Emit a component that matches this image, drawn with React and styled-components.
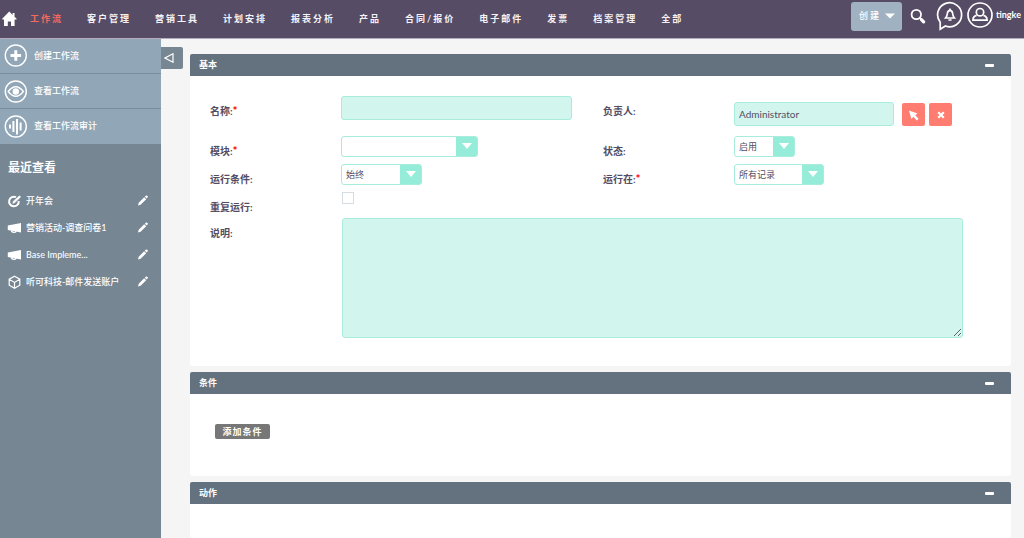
import React from "react";
import styled, { createGlobalStyle, css } from "styled-components";

const GlobalStyle = createGlobalStyle`
  *, *::before, *::after { box-sizing: border-box; }
  body {
    margin: 0;
    background: #f5f5f5;
    color: #534d64;
    font-family: Lato, "Noto Sans CJK SC", sans-serif;
    font-size: 9px;
    line-height: 14px;
  }
  button, input, select, textarea { font: inherit; color: inherit; margin: 0; }
  button { border: 0; padding: 0; cursor: pointer; }
  a { color: inherit; text-decoration: none; }
  h2, ul { margin: 0; padding: 0; }
  ul { list-style: none; }
  svg { display: block; flex: none; }
`;

const Page = styled.div`
  display: flex;
  flex-direction: column;
  min-height: 100vh;
`;

const TopBar = styled.header`
  display: flex;
  justify-content: space-between;
  height: 38px;
  background: #564c65;
  color: #fff;
  box-shadow: 0 1px 0 #b5acbd;
  position: relative;
`;

const Nav = styled.nav`
  display: flex;
  align-items: center;
  padding-left: 2px;
`;

const HomeLink = styled.a`
  margin-right: 12px;
`;

const NavLink = styled.a`
  margin-right: 24px;
  font-weight: 700;
  letter-spacing: 2px;
  white-space: nowrap;
  color: ${(p) => (p.$active ? "#f5695f" : "#f5f3f7")};
`;

const Tools = styled.div`
  display: flex;
  align-items: flex-start;
  padding: 2px 3px 0 0;
`;

const CreateButton = styled.button`
  display: flex;
  align-items: center;
  justify-content: space-between;
  width: 51px;
  height: 29px;
  padding: 0 7px 2px 8px;
  margin-right: 8px;
  border-radius: 3px;
  background: #a0b2c1;
  color: #fff;
  font-weight: 500;
  letter-spacing: 2px;
`;

const IconButton = styled.button`
  display: flex;
  align-items: center;
  height: 28px;
  margin-right: ${(p) => p.$gap}px;
  background: none;
  color: #fff;
`;

const UserLink = styled.a`
  display: flex;
  align-items: center;
  gap: 3px;
  height: 26px;
  font-weight: 700;
`;

const Content = styled.div`
  display: flex;
  flex: 1;
`;

const Sidebar = styled.aside`
  flex: none;
  width: 161px;
  background: #778693;
  color: #fff;
`;

const Actions = styled.nav`
  padding-bottom: 1px;
  background: #91a6b6;
`;

const ActionLink = styled.a`
  display: flex;
  align-items: center;
  gap: 7px;
  height: 35px;
  padding-left: 4px;
  font-weight: 500;
  & + & {
    border-top: 1px solid #7b8d9b;
  }
`;

const RecentTitle = styled.h2`
  padding: 16px 8px 11px;
  font-size: 12px;
  line-height: 16px;
  font-weight: 700;
`;

const RecentItem = styled.li`
  display: flex;
  align-items: center;
  justify-content: space-between;
  height: 27px;
  padding: 0 13px 0 7px;
`;

const RecentLink = styled.a`
  display: flex;
  align-items: center;
  gap: 4px;
  font-weight: 500;
  white-space: nowrap;
`;

const Main = styled.main`
  display: flex;
  align-items: stretch;
  gap: 7px;
  flex: 1;
  min-width: 0;
  padding-right: 13px;
`;

const CollapseButton = styled.button`
  display: flex;
  align-items: center;
  justify-content: center;
  width: 22px;
  height: 22px;
  margin-top: 9px;
  padding-right: 6px;
  border-radius: 0 2px 2px 0;
  background: #778693;
`;

const Panels = styled.form`
  display: flex;
  flex-direction: column;
  gap: 6px;
  flex: 1;
  min-width: 0;
  padding-top: 16px;
`;

const Panel = styled.section`
  display: flex;
  flex-direction: column;
  flex: ${(p) => (p.$fill ? 1 : "none")};
  border-radius: 3px;
  background: #fff;
`;

const PanelHeader = styled.div`
  display: flex;
  align-items: center;
  justify-content: space-between;
  height: 22px;
  padding: 0 17px 0 9px;
  border-radius: 2px 2px 0 0;
  background: #64727f;
  color: #fff;
`;

const PanelTitle = styled.h2`
  font-size: 9px;
  font-weight: 700;
`;

const ToggleButton = styled.button`
  width: 9px;
  height: 3px;
  border-radius: 1px;
  background: #fff;
`;

const FormGrid = styled.div`
  display: grid;
  grid-template-columns: 131fr 262fr 131fr 277fr;
  align-items: start;
  padding: 20px 0 27px 20px;
`;

const Label = styled.label`
  padding-top: 8px;
  font-size: 10px;
  font-weight: 700;
`;

const Required = styled.span`
  color: #ff0000;
  font-size: 12px;
  line-height: 12px;
`;

const Field = styled.div`
  display: flex;
  align-items: center;
  padding-bottom: ${(p) => p.$bottom || 7}px;
  padding-top: ${(p) => p.$top || 0}px;
  ${(p) => p.$wide && css`grid-column: 2 / 5;`}
`;

const fieldBox = css`
  border: 1px solid #a8ecdb;
  border-radius: 3px;
  background: #d2f6ee;
  outline: 0;
`;

const TextInput = styled.input`
  ${fieldBox}
  width: ${(p) => p.$width}px;
  height: 24px;
  padding: 0 4px;
  font-size: 10px;
`;

const TextArea = styled.textarea`
  ${fieldBox}
  width: 100%;
  height: 120px;
  margin: 0 48px 0 1px;
`;

const SquareButton = styled.button`
  display: flex;
  align-items: center;
  justify-content: center;
  width: 23px;
  height: 23px;
  margin: 2px 0 0 ${(p) => p.$gap}px;
  border-radius: 2px;
  background: #ff7d70;
`;

const SelectWrap = styled.div`
  position: relative;
  width: ${(p) => p.$width}px;
  &::after {
    content: "";
    position: absolute;
    top: 7px;
    right: 6px;
    border: 5px solid transparent;
    border-top: 6px solid #fff;
    border-bottom: 0;
    pointer-events: none;
  }
`;

const Select = styled.select`
  appearance: none;
  display: block;
  width: 100%;
  height: 21px;
  padding: 0 24px 0 4px;
  border: 1px solid #a8ecdb;
  border-radius: 3px;
  background: linear-gradient(#95ecd8, #95ecd8) right / 21px 100% no-repeat #fff;
  outline: 0;
`;

const CheckBox = styled.input`
  appearance: none;
  width: 12px;
  height: 12px;
  margin-left: 1px;
  border: 1px solid #d5dde3;
  background: #fff;
`;

const ConditionBody = styled.div`
  padding: 30px 25px 37px;
`;

const AddButton = styled.button`
  display: block;
  width: 55px;
  height: 15px;
  border-radius: 2px;
  background: #777;
  color: #fff;
  font-weight: 700;
  letter-spacing: 1px;
  line-height: 15px;
`;

const HomeIcon = () => (
  <svg width="16" height="16" viewBox="0 0 16 16" fill="#fff">
    <path d="M7.3 .6 0.2 7.8V8.6H2V15H5.8V10.5H9V15H12.6V8.6H14.6V7.8L12.5 5.7V2H10.6V3.9Z" />
  </svg>
);

const SearchIcon = () => (
  <svg width="16" height="16" viewBox="0 0 16 16" fill="none" stroke="#fff">
    <circle cx="6.3" cy="6.5" r="4.7" strokeWidth="1.8" />
    <path d="m9.7 9.9 1.8 1.8" strokeWidth="1.6" />
    <path d="m11.5 11.7 2.1 2.1" strokeWidth="3.2" strokeLinecap="round" />
  </svg>
);

const BellIcon = () => (
  <svg width="28" height="30" viewBox="0 0 28 30" fill="none" stroke="#fff" strokeWidth="1.7">
    <path d="M4.2 21.2A12 12 0 1 1 9.4 25L4.2 28.3Z" />
    <path d="M9.6 17c1.6-1.8 1.4-2.8 1.8-4.8.3-1.7 1.1-2.6 2.6-2.8 1.5.2 2.3 1.1 2.6 2.8.4 2 .2 3 1.8 4.8Z" />
    <path d="M14 7.4v2M12.4 19h3.2" />
  </svg>
);

const UserIcon = () => (
  <svg width="26" height="26" viewBox="0 0 26 26" fill="none" stroke="#fff" strokeWidth="1.7">
    <circle cx="13" cy="13" r="12" />
    <circle cx="13" cy="10.2" r="3.7" />
    <path d="M9.6 13.4c-2.4.6-3.7 1.9-3.7 4.8h14.2c0-2.9-1.3-4.2-3.7-4.8" />
  </svg>
);

const RingIcon = ({ children }) => (
  <svg width="23" height="23" viewBox="0 0 23 23" fill="none" stroke="#fff">
    <circle cx="11.8" cy="11.5" r="10.5" strokeWidth="1.4" />
    {children}
  </svg>
);

const actionIcons = {
  plus: <path d="M11.8 6.2v10.6M6.5 11.5h10.6" strokeWidth="3" />,
  eye: (
    <>
      <path d="M4.2 11.5q7.6-9.6 15.2 0q-7.6 9.6-15.2 0Z" strokeWidth="1.4" />
      <circle cx="11.8" cy="11.5" r="3.2" fill="#fff" stroke="none" />
    </>
  ),
  bars: <path d="M6 9.5v4M9.4 6v11M13 4v15.4M16.6 7.5v8" strokeWidth="2" />,
};

const RecentIcon = ({ type }) => (
  <svg width="15" height="14" viewBox="0 0 15 14" fill="none" stroke="#fff">
    {type === "target" && (
      <>
        <path d="M9 3.2A4.8 4.8 0 1 0 11.7 7" strokeWidth="2" />
        <path d="m5.8 9.4.6-2.2 6-5.4 1.2 1.2-5.8 5.6Z" fill="#fff" strokeWidth=".6" />
      </>
    )}
    {type === "horn" && (
      <>
        <path d="M.8 4.6 14 2v9.4L.8 9Z" fill="#fff" stroke="none" />
        <path d="M4.2 9.4q.5 2.2 3.2 2 1.6 0 1.6-1.4" strokeWidth="1.4" />
      </>
    )}
    {type === "cube" && (
      <path strokeWidth="1.2" d="m7.5 1.2 5.3 3v6l-5.3 3-5.3-3v-6ZM2.2 4.2l5.3 3.2 5.3-3.2M7.5 7.4v5.8" />
    )}
  </svg>
);

const PencilIcon = () => (
  <svg width="10" height="11" viewBox="0 0 10 11" fill="#fff">
    <path d="M0 10.5.7 7.8 6.2 2.3 8.2 4.3 2.6 9.7ZM6.8 1.7 8 .6q.6-.4 1.1.1l.6.6q.4.5 0 1L8.7 3.6Z" />
  </svg>
);

const navItems = ["工作流", "客户管理", "营销工具", "计划安排", "报表分析", "产品", "合同/报价", "电子邮件", "发票", "档案管理", "全部"];

const actions = [
  { icon: "plus", text: "创建工作流" },
  { icon: "eye", text: "查看工作流" },
  { icon: "bars", text: "查看工作流审计" },
];

const recent = [
  { icon: "target", text: "开年会" },
  { icon: "horn", text: "营销活动-调查问卷1" },
  { icon: "horn", text: "Base Impleme..." },
  { icon: "cube", text: "听可科技-邮件发送账户" },
];

const FieldLabel = ({ id, text, required }) => (
  <Label htmlFor={id}>
    {text}:{required && <Required>*</Required>}
  </Label>
);

const SelectField = ({ id, width, option }) => (
  <Field>
    <SelectWrap $width={width}>
      <Select id={id}>
        <option>{option}</option>
      </Select>
    </SelectWrap>
  </Field>
);

const Section = ({ title, fill, children }) => (
  <Panel $fill={fill}>
    <PanelHeader>
      <PanelTitle>{title}</PanelTitle>
      <ToggleButton type="button" aria-label={`折叠${title}`} />
    </PanelHeader>
    {children}
  </Panel>
);

export default function App() {
  return (
    <Page>
      <GlobalStyle />
      <TopBar>
        <Nav>
          <HomeLink href="#" aria-label="首页">
            <HomeIcon />
          </HomeLink>
          {navItems.map((item, i) => (
            <NavLink key={item} href="#" $active={i === 0}>
              {item}
            </NavLink>
          ))}
        </Nav>
        <Tools>
          <CreateButton type="button">
            创建
            <svg width="10" height="6" viewBox="0 0 10 6" fill="#fff">
              <path d="M0 .5h10L5 5.5Z" />
            </svg>
          </CreateButton>
          <IconButton type="button" aria-label="搜索" $gap={10}>
            <SearchIcon />
          </IconButton>
          <IconButton type="button" aria-label="通知" $gap={3}>
            <BellIcon />
          </IconButton>
          <UserLink href="#">
            <UserIcon />
            tingke
          </UserLink>
        </Tools>
      </TopBar>
      <Content>
        <Sidebar>
          <Actions>
            {actions.map((a) => (
              <ActionLink key={a.text} href="#">
                <RingIcon>{actionIcons[a.icon]}</RingIcon>
                {a.text}
              </ActionLink>
            ))}
          </Actions>
          <RecentTitle>最近查看</RecentTitle>
          <ul>
            {recent.map((r) => (
              <RecentItem key={r.text}>
                <RecentLink href="#">
                  <RecentIcon type={r.icon} />
                  {r.text}
                </RecentLink>
                <a href="#" aria-label={`编辑${r.text}`}>
                  <PencilIcon />
                </a>
              </RecentItem>
            ))}
          </ul>
        </Sidebar>
        <Main>
          <CollapseButton type="button" aria-label="折叠侧栏">
            <svg width="10" height="10" viewBox="0 0 10 10" fill="none" stroke="#fff" strokeWidth="1.2">
              <path d="M9 .8v8.4L.9 5Z" />
            </svg>
          </CollapseButton>
          <Panels>
            <Section title="基本">
              <FormGrid>
                <FieldLabel id="name" text="名称" required />
                <Field>
                  <TextInput id="name" type="text" $width={231} />
                </Field>
                <FieldLabel id="owner" text="负责人" />
                <Field $top={5} $bottom={10}>
                  <TextInput id="owner" type="text" $width={160} defaultValue="Administrator" />
                  <SquareButton type="button" aria-label="选择" $gap={8}>
                    <svg width="11" height="12" viewBox="0 0 11 12" fill="#fff">
                      <path d="M1 1.5 9.5 4.5 7.2 6.2 10.6 9.8 8.8 11.4 5.4 7.8 3.4 10Z" />
                    </svg>
                  </SquareButton>
                  <SquareButton type="button" aria-label="清除" $gap={4}>
                    <svg width="8" height="8" viewBox="0 0 8 8" stroke="#fff" strokeWidth="2.2">
                      <path d="m1.2 1.2 5.6 5.6M6.8 1.2 1.2 6.8" />
                    </svg>
                  </SquareButton>
                </Field>
                <FieldLabel id="module" text="模块" required />
                <SelectField id="module" width={137} option="" />
                <FieldLabel id="status" text="状态" />
                <SelectField id="status" width={61} option="启用" />
                <FieldLabel id="when" text="运行条件" />
                <SelectField id="when" width={81} option="始终" />
                <FieldLabel id="on" text="运行在" required />
                <SelectField id="on" width={90} option="所有记录" />
                <FieldLabel id="repeat" text="重复运行" />
                <Field $bottom={14} $wide>
                  <CheckBox id="repeat" type="checkbox" />
                </Field>
                <FieldLabel id="description" text="说明" />
                <Field $bottom={1} $wide>
                  <TextArea id="description" />
                </Field>
              </FormGrid>
            </Section>
            <Section title="条件">
              <ConditionBody>
                <AddButton type="button">添加条件</AddButton>
              </ConditionBody>
            </Section>
            <Section title="动作" fill />
          </Panels>
        </Main>
      </Content>
    </Page>
  );
}
